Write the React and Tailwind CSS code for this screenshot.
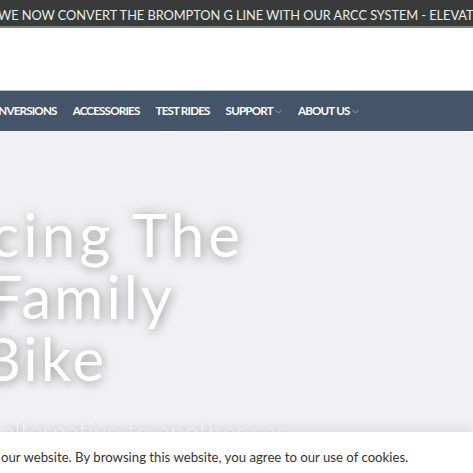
import React from "react";

const navItems = [
  { label: "CONVERSIONS" },
  { label: "ACCESSORIES" },
  { label: "TEST RIDES" },
  { label: "SUPPORT", menu: true },
  { label: "ABOUT US", menu: true },
];

function Chevron() {
  return (
    <svg width="7" height="5" viewBox="0 0 7 5" className="ml-[2px] mt-[1px]">
      <path d="M0.5 1 L3.5 4 L6.5 1" fill="none" stroke="#9aa5b4" strokeWidth="1" />
    </svg>
  );
}

export default function App() {
  const heroShadow = { textShadow: "0 0 14px rgba(0,0,0,0.28), 2px 3px 8px rgba(0,0,0,0.18)" };
  return (
    <div className="relative h-[473px] w-[473px] overflow-hidden bg-white font-['Lato',sans-serif]">
      {/* announcement strip */}
      <div className="h-[5px] bg-[#3b3b3b]" />
      <div className="flex h-[23px] items-center overflow-hidden whitespace-nowrap border-b-[2px] border-[#7d837f] bg-[#363c38]">
        <span className="ml-[-2px] text-[12.8px] leading-none tracking-[-0.05px] text-[#ececec]">
          WE NOW CONVERT THE BROMPTON G LINE WITH OUR ARCC SYSTEM - ELEVATE YOUR RIDE
        </span>
      </div>

      {/* header space */}
      <div className="h-[62px] bg-white" />

      {/* main navigation */}
      <div className="flex h-[41px] items-center border-t border-[#b9c0c8] bg-[#455569] whitespace-nowrap">
        <div className="ml-[-17px] flex items-center gap-[16px] text-[11.6px] font-bold tracking-[-0.8px] text-white">
          {navItems.map((item) => (
            <span key={item.label} className="flex items-center">
              {item.label}
              {item.menu && <Chevron />}
            </span>
          ))}
        </div>
      </div>

      {/* hero */}
      <div className="h-[302px] border-t border-[#fafafa] bg-[#f1f1f3] pt-[71px]">
        <div className="whitespace-nowrap text-[60px] font-normal leading-[62px] tracking-[3px] text-white" style={heroShadow}>
          <div className="ml-[-230px] tracking-[4px]">Introducing The</div>
          <div className="ml-[-249px]">Electric Family</div>
          <div className="ml-[-207px]">Cargo Bike</div>
        </div>
        <div className="ml-[-135px] mt-[29px] whitespace-nowrap text-[26px] font-light leading-none text-[#fbfbfb]" style={{ textShadow: "0 0 8px rgba(0,0,0,0.18)" }}>
          The perfect alternative to another car
        </div>
      </div>

      {/* cookie notice */}
      <div className="absolute bottom-0 left-0 right-0 h-[41px] bg-white shadow-[0_-4px_10px_rgba(0,0,0,0.08)]">
        <p className="ml-[1px] mt-[19px] whitespace-nowrap text-[13.2px] leading-none text-[#333]">
          our website. By browsing this website, you agree to our use of cookies.
        </p>
      </div>
    </div>
  );
}
